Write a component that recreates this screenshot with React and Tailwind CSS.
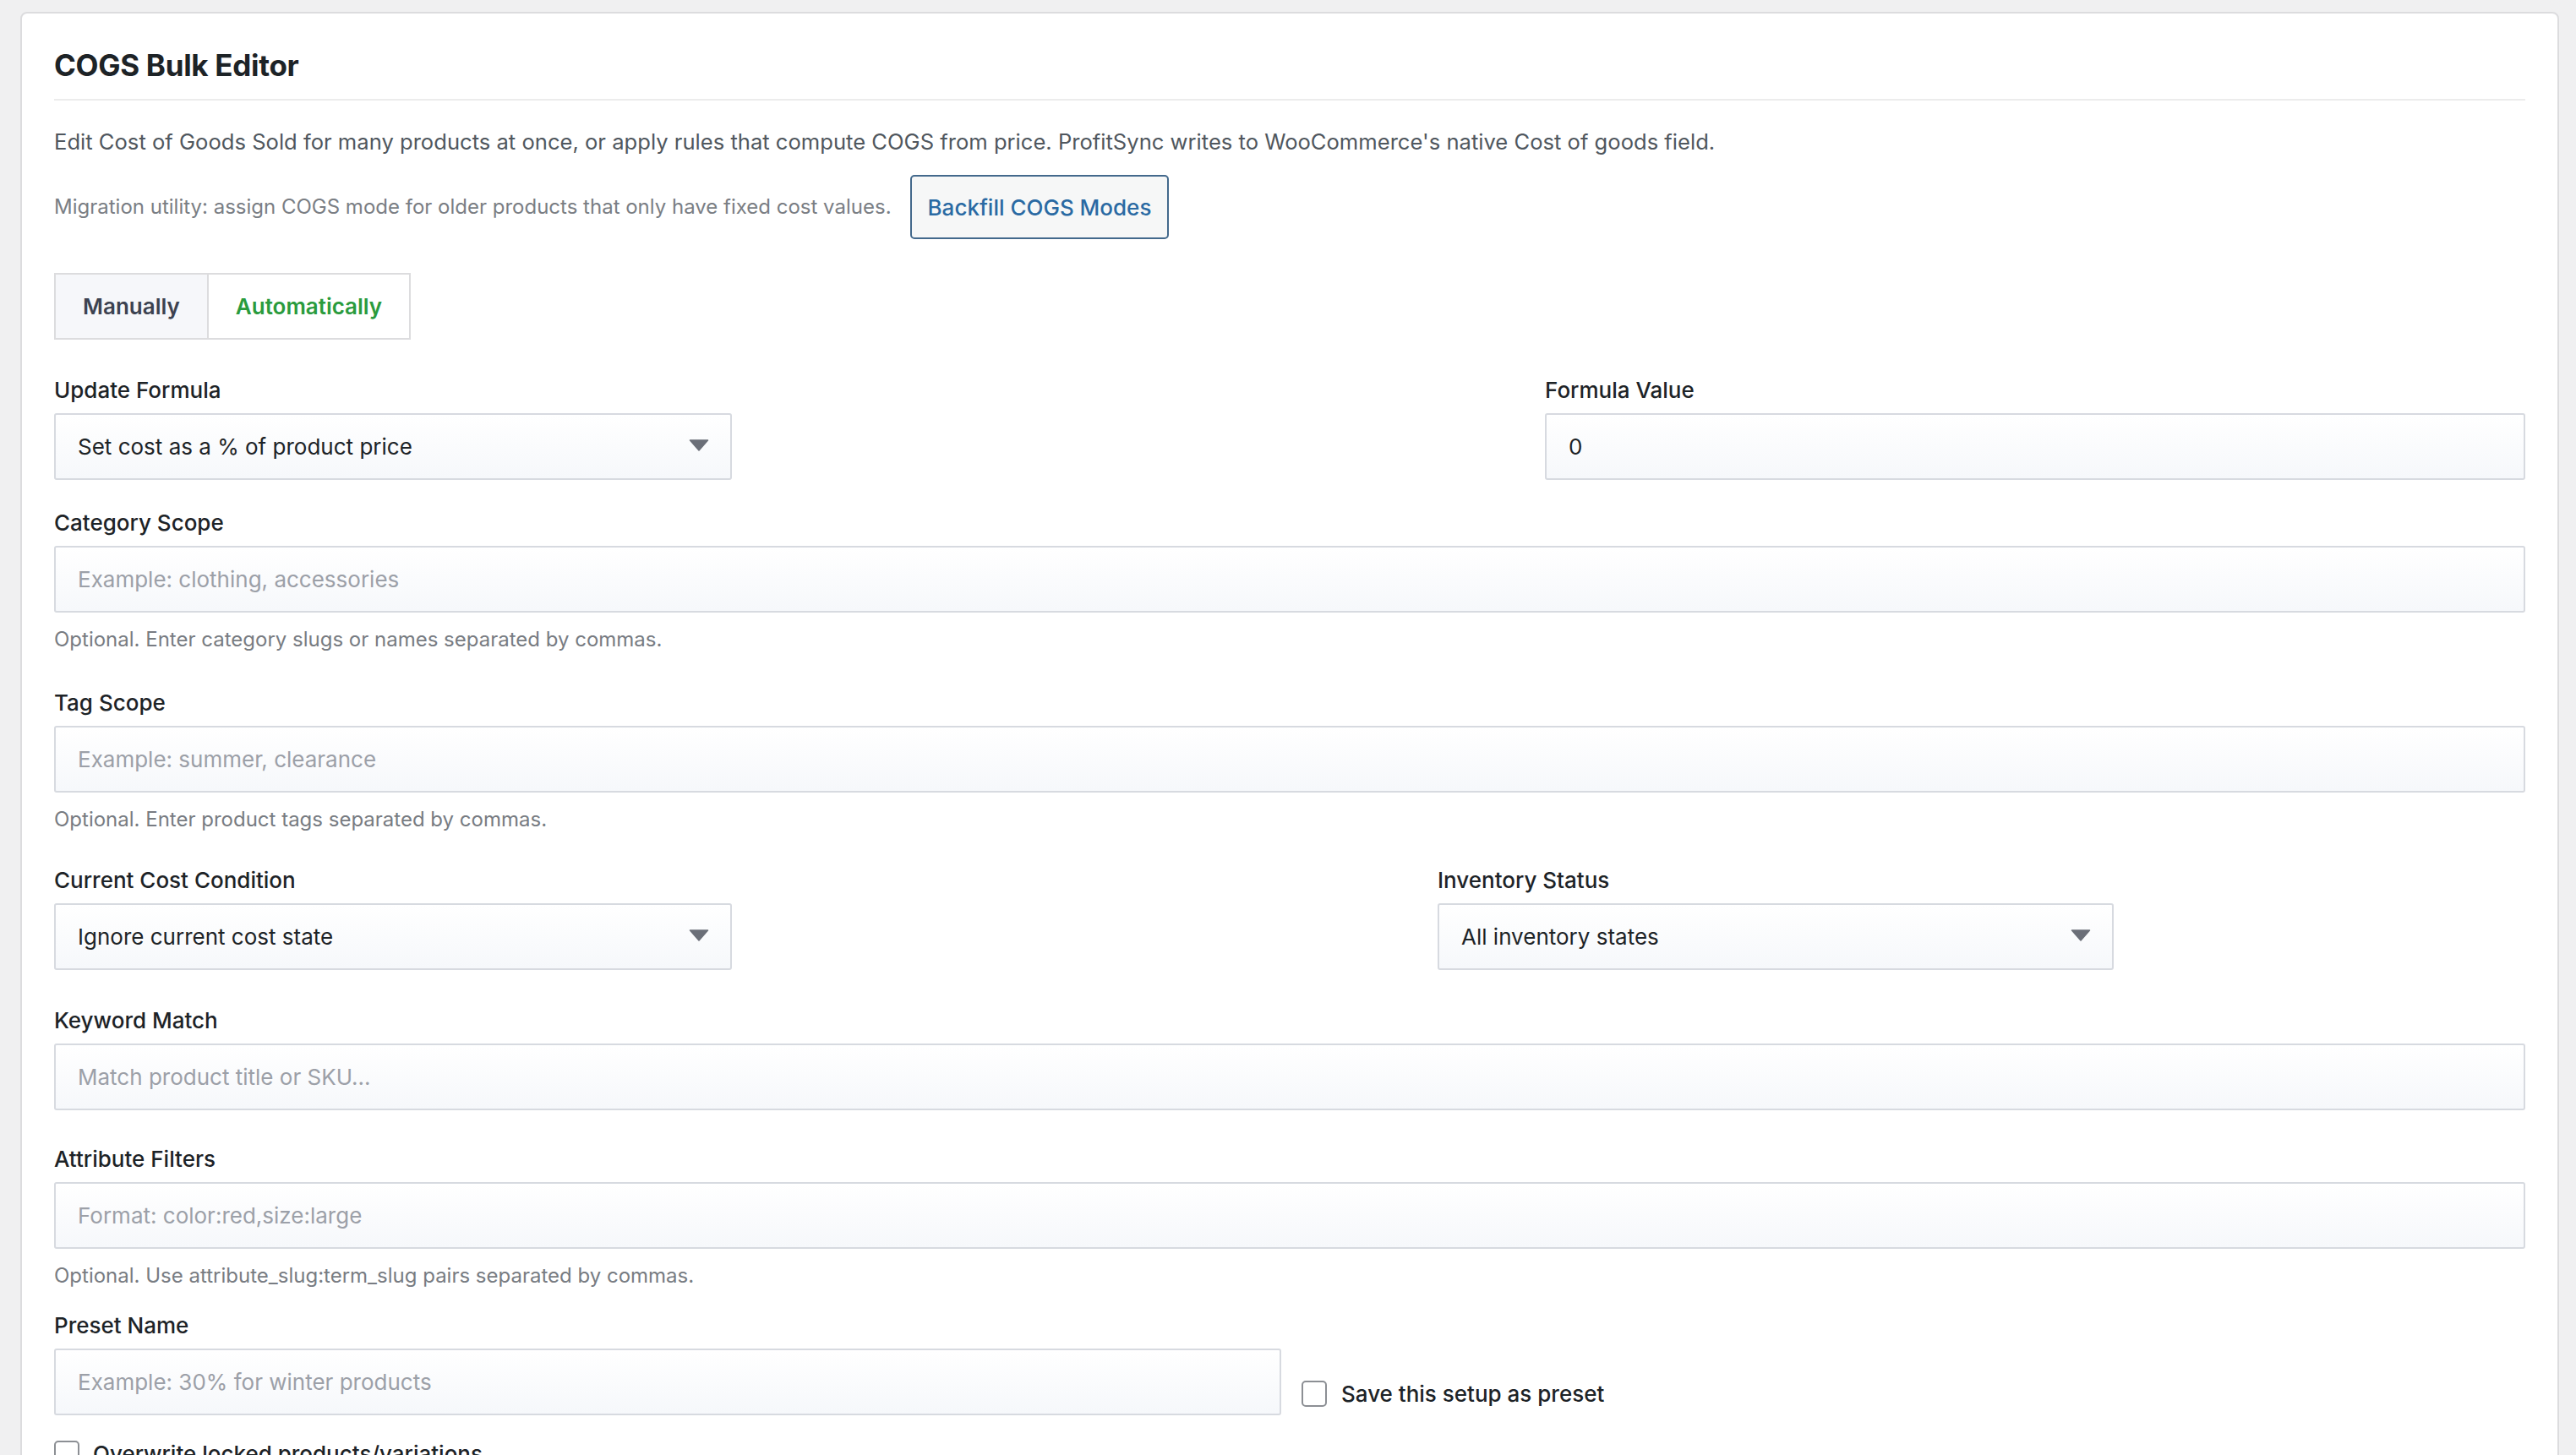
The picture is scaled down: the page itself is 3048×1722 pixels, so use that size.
import React from "react";

const Label = ({ children }) => (
  <div className="text-[26px] leading-[36px] font-medium text-[#1d2327] mb-[9px]">{children}</div>
);

const Help = ({ children }) => (
  <p className="mt-[16px] text-[24px] leading-[32px] text-[#787c82]">{children}</p>
);

const TextInput = ({ placeholder, value, className = "" }) => (
  <input
    type="text"
    readOnly
    defaultValue={value}
    placeholder={placeholder}
    className={`h-[79px] w-full rounded-[3px] border-2 border-[#d7dae0] bg-gradient-to-b from-white to-[#f6f8fb] px-[26px] text-[26px] text-[#1d2327] placeholder:text-[#9ca0a8] outline-none ${className}`}
  />
);

const Select = ({ value }) => (
  <div className="relative flex h-[79px] w-full items-center rounded-[3px] border-2 border-[#d7dae0] bg-gradient-to-b from-white to-[#f6f8fb] px-[26px] text-[26px] text-[#1d2327]">
    <span>{value}</span>
    <svg
      className="absolute right-[25px] top-[29px]"
      width="24"
      height="14"
      viewBox="0 0 24 14"
      aria-hidden
    >
      <path d="M1.5 1h21L12 13z" fill="#6b6f78" stroke="#6b6f78" strokeWidth="1.5" strokeLinejoin="round" />
    </svg>
  </div>
);

const Checkbox = () => (
  <span className="inline-block h-[31px] w-[30px] shrink-0 rounded-[5px] border-2 border-[#8c8f94] bg-white" />
);

export default function App() {
  return (
    <div
      className="min-h-screen bg-[#f0f0f1] pl-[24px] pr-[20px] pt-[14px]"
      style={{ fontFamily: "Inter, 'Noto Sans', 'Liberation Sans', sans-serif" }}
    >
      <div className="rounded-[8px] border-2 border-[#dcdcde] bg-white px-[38px] pt-[39px] pb-[40px]">
        {/* Header */}
        <h2 className="border-b-2 border-[#ececec] pb-[18px] text-[35px] leading-[44px] font-bold tracking-[-0.3px] text-[#1d2327]">
          COGS Bulk Editor
        </h2>

        <p className="mt-[31px] text-[25.6px] leading-[36px] text-[#50575e]">
          Edit Cost of Goods Sold for many products at once, or apply rules that compute COGS from price. ProfitSync writes to WooCommerce's native Cost of goods field.
        </p>

        <div className="mt-[21px] flex items-center gap-[22px]">
          <span className="text-[24px] leading-[32px] text-[#7a7e84]">
            Migration utility: assign COGS mode for older products that only have fixed cost values.
          </span>
          <button className="h-[76px] rounded-[5px] border-2 border-[#43698c] bg-[#f6f7f7] px-[19px] text-[26px] font-medium text-[#2a6aa3]">
            Backfill COGS Modes
          </button>
        </div>

        {/* Mode tabs */}
        <div className="mt-[40px] inline-flex h-[79px] border-2 border-[#dcdcde]">
          <button className="border-r-2 border-[#dcdcde] bg-[#f6f7fa] px-[32px] text-[26px] font-semibold text-[#3c4250]">
            Manually
          </button>
          <button className="bg-white px-[32px] text-[26px] font-semibold text-[#2a9b3d]">
            Automatically
          </button>
        </div>

        {/* Formula */}
        <div className="mt-[42px] flex justify-between">
          <div className="w-[802px]">
            <Label>Update Formula</Label>
            <Select value="Set cost as a % of product price" />
          </div>
          <div className="w-[1160px]">
            <Label>Formula Value</Label>
            <TextInput value="0" />
          </div>
        </div>

        <div className="mt-[33px]">
          <Label>Category Scope</Label>
          <TextInput placeholder="Example: clothing, accessories" />
          <Help>Optional. Enter category slugs or names separated by commas.</Help>
        </div>

        <div className="mt-[41px]">
          <Label>Tag Scope</Label>
          <TextInput placeholder="Example: summer, clearance" />
          <Help>Optional. Enter product tags separated by commas.</Help>
        </div>

        <div className="mt-[38px] grid grid-cols-[1637px_800px]">
          <div className="w-[802px]">
            <Label>Current Cost Condition</Label>
            <Select value="Ignore current cost state" />
          </div>
          <div>
            <Label>Inventory Status</Label>
            <Select value="All inventory states" />
          </div>
        </div>

        <div className="mt-[42px]">
          <Label>Keyword Match</Label>
          <TextInput placeholder="Match product title or SKU..." />
        </div>

        <div className="mt-[40px]">
          <Label>Attribute Filters</Label>
          <TextInput placeholder="Format: color:red,size:large" />
          <Help>Optional. Use attribute_slug:term_slug pairs separated by commas.</Help>
        </div>

        <div className="mt-[25px]">
          <Label>Preset Name</Label>
          <div className="flex items-center gap-[24px]">
            <div className="w-[1452px]">
              <TextInput placeholder="Example: 30% for winter products" />
            </div>
            <label className="flex items-center gap-[17px] pt-[28px] text-[26px] font-medium text-[#1d2327]">
              <Checkbox />
              Save this setup as preset
            </label>
          </div>
        </div>

        <label className="mt-[26px] flex items-center gap-[16px] text-[26px] font-medium text-[#1d2327]">
          <Checkbox />
          Overwrite locked products/variations
        </label>
      </div>
    </div>
  );
}
